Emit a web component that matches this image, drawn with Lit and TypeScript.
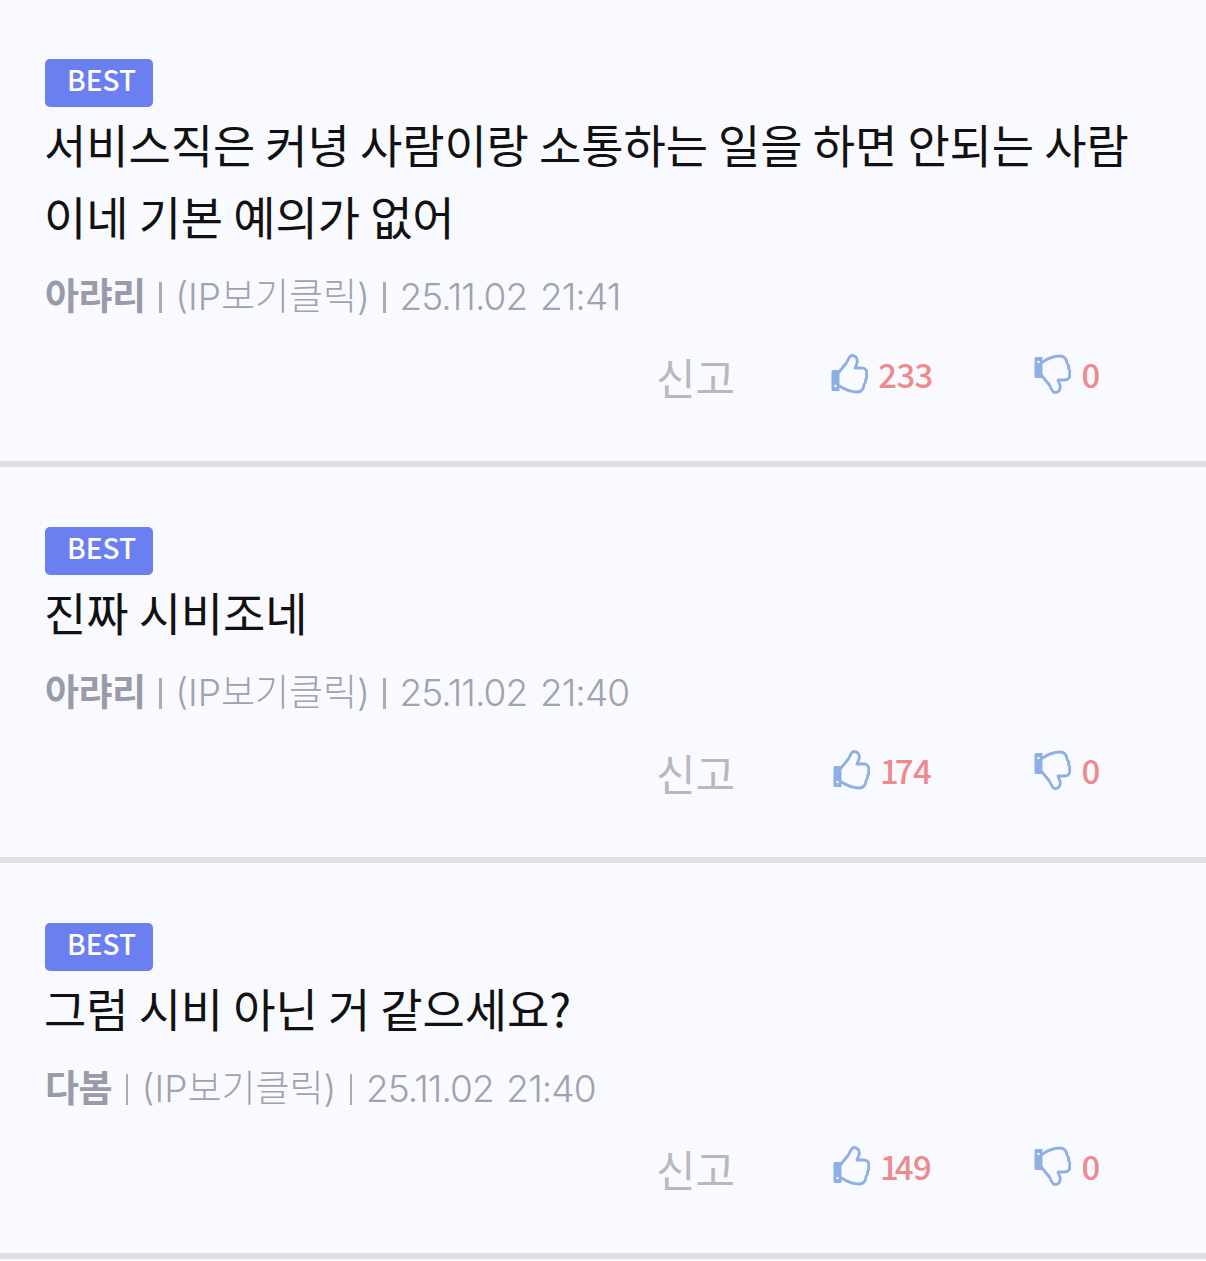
import { LitElement, html, css, svg } from "lit";
import { customElement } from "lit/decorators.js";

const comments = [
  { text: "서비스직은 커녕 사람이랑 소통하는 일을 하면 안되는 사람이네 기본 예의가 없어", user: "아랴리", date: "25.11.02 21:41", up: 233 },
  { text: "진짜 시비조네", user: "아랴리", date: "25.11.02 21:40", up: 174 },
  { text: "그럼 시비 아닌 거 같으세요?", user: "다봄", date: "25.11.02 21:40", up: 149 },
];

const thumb = svg`
  <path d="M2 16h6.500v21H2a1.500 1.500 0 0 1-1.500-1.500v-18A1.500 1.500 0 0 1 2 16z" fill="#8cb0e4"/>
  <path d="M8 18 15 9.500C17 7 18 1.500 21 1.500c4 0 6 3.500 5 7.500l-2 5h7c3.500 0 5.500 3 4.500 6.500 1 2-.2 4-1 5 .5 2-.3 4-1.500 5 0 4-2.500 7.500-6.500 7.500-6 0-12-2-18-6"
    fill="none" stroke="#8cb0e4" stroke-width="2.8" stroke-linejoin="round" stroke-linecap="round"/>
  <circle cx="4.500" cy="32" r="1.200" fill="#fff"/>`;

const count = (n: number) =>
  String(n)
    .split("")
    .map((d) => (d === "1" ? html`<span class="one">1</span>` : d));

@customElement("app-root")
export class AppRoot extends LitElement {
  static styles = css`
    :host {
      display: block;
      background: #f9faff;
      font-family: "Noto Sans CJK KR", "Noto Sans", sans-serif;
      height: 1261px;
      overflow: hidden;
    }
    .item {
      height: 396px;
      box-sizing: border-box;
      padding: 0 60px 0 45px;
      border-bottom: 6px solid #dfe0e5;
      display: flex;
      flex-direction: column;
    }
    .item.first { height: 467px; padding-top: 59px; }
    .item:not(.first) { padding-top: 60px; }
    .badge {
      width: 108px;
      height: 48px;
      box-sizing: border-box;
      background: #6b7ff0;
      color: #fff;
      border-radius: 5px;
      font-size: 28px;
      font-weight: 500;
      line-height: 41px;
      padding-left: 22px;
      flex: none;
    }
    .text {
      margin: 0 0 0 -1px;
      font-size: 46px;
      line-height: 72px;
      color: #111;
      word-break: break-all;
      letter-spacing: -0.1px;
    }
    .meta {
      margin-top: 19px;
      font-family: "Inter", "Noto Sans CJK KR", sans-serif;
      font-size: 37px;
      line-height: 54px;
      color: #a0a2ae;
      font-weight: 300;
      white-space: nowrap;
      display: flex;
      align-items: center;
      gap: 13.5px;
    }
    .meta b { font-weight: 700; color: #999ba8; letter-spacing: -0.5px; }
    .sep { width: 2.5px; height: 31px; background: #a9abb5; flex: none; }
    .date { letter-spacing: -0.9px; word-spacing: 3px; }
    .actions {
      margin-top: 23px;
      height: 54px;
      padding-right: 4px;
      display: grid;
      grid-template-columns: 1fr 116px 180px 150px;
      column-gap: 20px;
      align-items: center;
    }
    .report {
      grid-column: 2;
      font-size: 43px;
      line-height: 54px;
      padding-top: 2px;
      color: #b8b9bf;
      font-weight: 400;
      white-space: nowrap;
    }
    .vote {
      display: flex;
      align-items: center;
      justify-content: center;
      gap: 10px;
      margin-top: -2px;
      color: #ef8a8c;
      font-size: 33px;
      letter-spacing: -0.6px;
      font-weight: 500;
      line-height: 54px;
    }
    .one { letter-spacing: -4px; }
    .vote svg { width: 37px; height: 40px; flex: none; }
    .flip { transform: scaleY(-1); }
  `;

  render() {
    return comments.map(
      (c, i) => html`
        <div class="item ${i === 0 ? "first" : ""}">
          <div class="badge">BEST</div>
          <p class="text">${c.text}</p>
          <div class="meta">
            <b>${c.user}</b><span class="sep"></span><span>(IP보기클릭)</span><span class="sep"></span><span class="date">${c.date}</span>
          </div>
          <div class="actions">
            <span class="report">신고</span>
            <span class="vote up"><svg viewBox="0 0 37 40">${thumb}</svg><span>${count(c.up)}</span></span>
            <span class="vote down"><svg class="flip" viewBox="0 0 37 40">${thumb}</svg>0</span>
          </div>
        </div>
      `
    );
  }
}
